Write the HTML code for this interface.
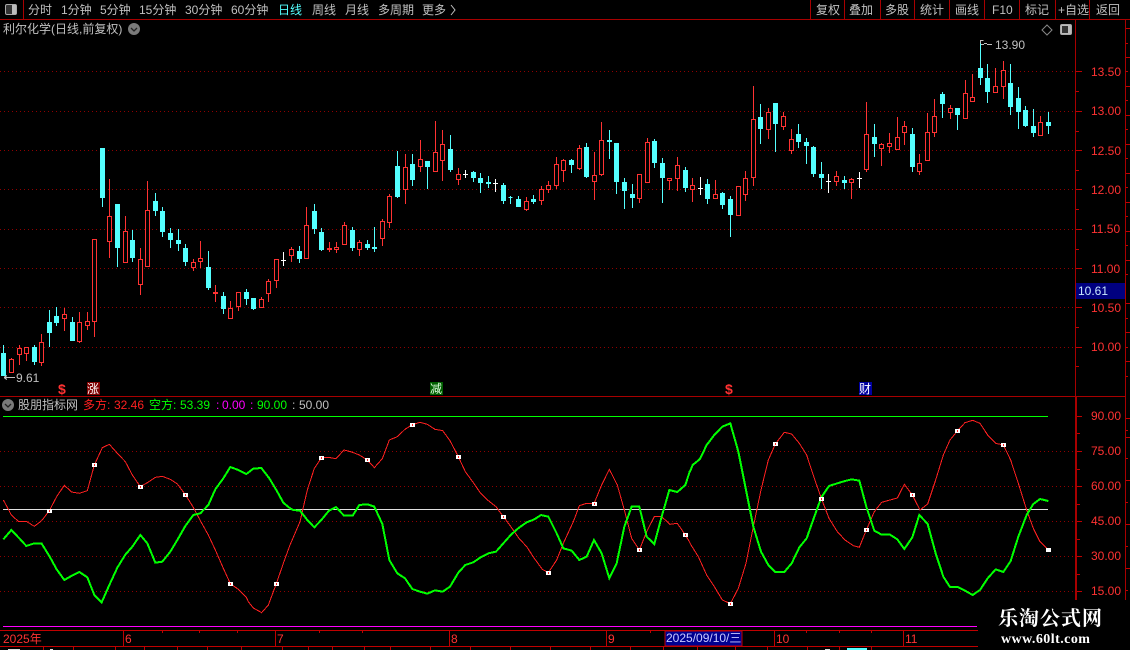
<!DOCTYPE html>
<html><head><meta charset="utf-8">
<style>
html,body{margin:0;padding:0;background:#000;}
#p{position:relative;width:1130px;height:650px;overflow:hidden;background:#000;font:12px/16px "Liberation Sans","WenQuanYi Zen Hei","Noto Sans CJK SC",sans-serif;color:#c0c0c0;}
#p svg{position:absolute;left:0;top:0;}
.t{position:absolute;white-space:nowrap;line-height:16px;height:16px;}
.r{color:#ff3232}.g{color:#00ff00}.m{color:#ff00ff}.c{color:#54ffff}.a{color:#ff3232;left:1091px}
</style></head><body><div id="p">
<svg width="1130" height="650" viewBox="0 0 1130 650" shape-rendering="crispEdges">
<!-- frame -->
<g fill="#a80000">
<rect x="0" y="19" width="1130" height="1"/>
<rect x="23" y="0" width="1" height="19"/>
<rect x="810" y="0" width="1" height="19"/><rect x="844" y="0" width="1" height="19"/><rect x="880" y="0" width="1" height="19"/><rect x="914" y="0" width="1" height="19"/><rect x="949" y="0" width="1" height="19"/><rect x="984" y="0" width="1" height="19"/><rect x="1019" y="0" width="1" height="19"/><rect x="1055" y="0" width="1" height="19"/><rect x="1089" y="0" width="1" height="19"/>
<rect x="0" y="396" width="1075" height="1"/>
<rect x="1075" y="20" width="1" height="376"/>
<rect x="1075" y="396" width="2" height="204"/>
<rect x="1125" y="20" width="1" height="580"/>
<rect x="1075" y="396" width="51" height="1"/>
<path d="M0 630.5H978M0 646.5H978" stroke="#c00000" fill="none"/>
</g>
<!-- ticks -->
<path d="M1076 71.5h6M1076 91.5h3M1076 111.5h6M1076 131.5h3M1076 150.5h6M1076 170.5h3M1076 189.5h6M1076 209.5h3M1076 229.5h6M1076 249.5h3M1076 268.5h6M1076 288.5h3M1076 307.5h6M1076 327.5h3M1076 347.5h6M1076 366.5h3
M1077 416.5h5M1077 433.5h3M1077 451.5h5M1077 469.5h3M1077 486.5h5M1077 504.5h3M1077 521.5h5M1077 539.5h3M1077 556.5h5M1077 574.5h3M1077 591.5h5
M1126 28.5h4M1126 43.5h2M1126 57.5h4M1126 71.5h2M1126 86.5h4M1126 100.5h2M1126 115.5h4M1126 129.5h2M1126 144.5h4M1126 158.5h2M1126 173.5h4M1126 187.5h2M1126 202.5h4M1126 216.5h2M1126 231.5h4M1126 245.5h2M1126 260.5h4M1126 274.5h2M1126 303.5h4M1126 318.5h2M1126 332.5h4M1126 347.5h2M1126 361.5h4M1126 376.5h2
M1126 418.5h4M1126 430.5h2M1126 437.5h4M1126 458.5h2M1126 480.5h4M1126 502.5h2M1126 524.5h4M1126 546.5h2M1126 568.5h4M1126 590.5h2
M162.5 631v2M199.5 631v2M237.5 631v2M319.5 631v2M362.5 631v2M650.5 631v2M806.5 631v2M839.5 631v2M871.5 631v2
M123.5 631v15M275.5 631v15M449.5 631v15M606.5 631v15M774.5 631v15M903.5 631v15
M43.5 647v3M73.5 647v3M115.5 647v3M144.5 647v3M177.5 647v3M207.5 647v3M241.5 647v3M282.5 647v3M308.5 647v3M332.5 647v3M364.5 647v3M390.5 647v3M430.5 647v3M470.5 647v3M510.5 647v3M550.5 647v3M590.5 647v3M630.5 647v3M663.5 647v3M697.5 647v3M735.5 647v3M767.5 647v3M807.5 647v3M839.5 647v3M871.5 647v3" stroke="#c00000" fill="none"/>
<!-- grids -->
<g shape-rendering="geometricPrecision" stroke="#900000" stroke-dasharray="1 3" fill="none">
<path d="M0 71.5H1075"/><path d="M0 111.5H1075"/><path d="M0 150.5H1075"/><path d="M0 189.5H1075"/><path d="M0 229.5H1075"/><path d="M0 268.5H1075"/><path d="M0 307.5H1075"/><path d="M0 347.5H1075"/><path d="M0 451.5H1075"/><path d="M0 486.5H1075"/><path d="M0 521.5H1075"/><path d="M0 556.5H1075"/><path d="M0 591.5H1075"/>
</g>
<!-- red wicks -->
<path stroke="#ff3232" fill="none" d="M11.5 358V373M19.5 345V365M26.5 347V361M41.5 334V366M64.5 308V331M79.5 312V343M87.5 312V330M94.5 239V337M109.5 179V258M125.5 216V263M140.5 248V295M147.5 181V267M193.5 259V271M200.5 241V268M215.5 285V302M230.5 301V319M238.5 292V311M261.5 297V308M268.5 279V302M276.5 259V288M291.5 247V262M306.5 207V259M329.5 242V252M336.5 242V253M344.5 222V245M359.5 240V256M382.5 219V246M389.5 194V228M405.5 154V204M420.5 140V172M435.5 121V172M442.5 130V181M458.5 168V185M526.5 197V211M541.5 186V205M548.5 181V193M556.5 157V189M563.5 159V182M579.5 145V170M594.5 152V200M601.5 122V176M639.5 174V203M647.5 138V183M669.5 178V190M677.5 157V191M692.5 178V202M715.5 180V199M738.5 186V216M745.5 171V201M753.5 86V186M768.5 108V139M783.5 112V130M791.5 129V154M836.5 171V186M851.5 178V199M866.5 102V172M881.5 143V166M889.5 133V153M897.5 117V150M904.5 121V145M919.5 154V175M927.5 113V161M934.5 99V137M950.5 105V119M965.5 80V119M972.5 74V102M995.5 68V93M1003.5 61V99M1040.5 116V136"/>
<!-- red bodies -->
<path stroke="#ff3232" fill="#000" d="M9.5 359.5h4V372.5h-4zM17.5 348.5h4V354.5h-4zM24.5 347.5h4V353.5h-4zM39.5 342.5h4V362.5h-4zM62.5 314.5h4V318.5h-4zM77.5 322.5h4V341.5h-4zM85.5 321.5h4V325.5h-4zM92.5 239.5h4V321.5h-4zM107.5 216.5h4V241.5h-4zM123.5 231.5h4V262.5h-4zM138.5 259.5h4V284.5h-4zM145.5 210.5h4V266.5h-4zM191.5 262.5h4V267.5h-4zM198.5 258.5h4V261.5h-4zM213.5 292.5h4V293.5h-4zM228.5 308.5h4V318.5h-4zM236.5 292.5h4V306.5h-4zM259.5 299.5h4V307.5h-4zM266.5 281.5h4V293.5h-4zM274.5 259.5h4V280.5h-4zM289.5 249.5h4V255.5h-4zM304.5 225.5h4V258.5h-4zM327.5 248.5h4V249.5h-4zM334.5 247.5h4V249.5h-4zM342.5 225.5h4V244.5h-4zM357.5 242.5h4V249.5h-4zM380.5 221.5h4V238.5h-4zM387.5 196.5h4V222.5h-4zM403.5 167.5h4V189.5h-4zM418.5 159.5h4V166.5h-4zM433.5 152.5h4V171.5h-4zM440.5 144.5h4V160.5h-4zM456.5 174.5h4V179.5h-4zM524.5 201.5h4V209.5h-4zM539.5 189.5h4V200.5h-4zM546.5 185.5h4V189.5h-4zM554.5 164.5h4V185.5h-4zM561.5 160.5h4V170.5h-4zM577.5 148.5h4V168.5h-4zM592.5 175.5h4V181.5h-4zM599.5 140.5h4V174.5h-4zM637.5 174.5h4V198.5h-4zM645.5 142.5h4V182.5h-4zM667.5 178.5h4V180.5h-4zM675.5 165.5h4V178.5h-4zM690.5 185.5h4V189.5h-4zM713.5 194.5h4V198.5h-4zM736.5 186.5h4V215.5h-4zM743.5 178.5h4V194.5h-4zM751.5 119.5h4V177.5h-4zM766.5 112.5h4V129.5h-4zM781.5 116.5h4V126.5h-4zM789.5 139.5h4V150.5h-4zM834.5 176.5h4V181.5h-4zM849.5 179.5h4V182.5h-4zM864.5 134.5h4V169.5h-4zM879.5 144.5h4V148.5h-4zM887.5 143.5h4V146.5h-4zM895.5 137.5h4V149.5h-4zM902.5 126.5h4V132.5h-4zM917.5 163.5h4V171.5h-4zM925.5 132.5h4V160.5h-4zM932.5 116.5h4V132.5h-4zM948.5 108.5h4V112.5h-4zM963.5 93.5h4V118.5h-4zM970.5 97.5h4V101.5h-4zM993.5 86.5h4V92.5h-4zM1001.5 70.5h4V86.5h-4zM1038.5 122.5h4V135.5h-4z"/>
<!-- cyan -->
<path stroke="#54ffff" fill="#54ffff" d="M3.5 345V376M1.5 353.5h4V375.5h-4zM34.5 345V365M32.5 347.5h4V361.5h-4zM49.5 310V347M47.5 322.5h4V332.5h-4zM56.5 307V326M54.5 316.5h4V322.5h-4zM72.5 317V341M70.5 322.5h4V340.5h-4zM102.5 148V207M100.5 148.5h4V197.5h-4zM117.5 204V267M115.5 204.5h4V247.5h-4zM132.5 230V262M130.5 240.5h4V257.5h-4zM155.5 193V216M153.5 201.5h4V210.5h-4zM162.5 207V237M160.5 211.5h4V231.5h-4zM170.5 228V248M168.5 233.5h4V239.5h-4zM178.5 229V251M176.5 240.5h4V243.5h-4zM185.5 244V266M183.5 248.5h4V261.5h-4zM208.5 251V290M206.5 267.5h4V287.5h-4zM223.5 292V314M221.5 296.5h4V308.5h-4zM246.5 289V305M244.5 292.5h4V298.5h-4zM253.5 298V310M251.5 298.5h4V308.5h-4zM299.5 246V263M297.5 251.5h4V258.5h-4zM314.5 204V234M312.5 211.5h4V228.5h-4zM321.5 228V251M319.5 232.5h4V249.5h-4zM352.5 227V251M350.5 230.5h4V247.5h-4zM367.5 240V250M365.5 244.5h4V247.5h-4zM374.5 227V252M372.5 247.5h4V248.5h-4zM397.5 151V198M395.5 166.5h4V196.5h-4zM412.5 154V186M410.5 164.5h4V179.5h-4zM427.5 161V189M425.5 161.5h4V166.5h-4zM450.5 135V172M448.5 149.5h4V169.5h-4zM473.5 171V182M471.5 172.5h4V177.5h-4zM480.5 173V193M478.5 178.5h4V182.5h-4zM488.5 176V188M486.5 182.5h4V183.5h-4zM503.5 183V204M501.5 185.5h4V200.5h-4zM510.5 196V204M508.5 197.5h4V197.5h-4zM518.5 196V207M516.5 199.5h4V206.5h-4zM533.5 195V204M531.5 199.5h4V201.5h-4zM571.5 159V173M569.5 160.5h4V164.5h-4zM586.5 143V178M584.5 147.5h4V176.5h-4zM609.5 130V159M607.5 140.5h4V141.5h-4zM616.5 143V194M614.5 143.5h4V181.5h-4zM624.5 178V209M622.5 182.5h4V190.5h-4zM632.5 184V208M630.5 194.5h4V197.5h-4zM654.5 139V168M652.5 141.5h4V162.5h-4zM662.5 158V203M660.5 163.5h4V177.5h-4zM685.5 167V192M683.5 170.5h4V187.5h-4zM707.5 179V204M705.5 184.5h4V198.5h-4zM722.5 192V209M720.5 193.5h4V204.5h-4zM730.5 196V237M728.5 199.5h4V214.5h-4zM760.5 104V144M758.5 117.5h4V128.5h-4zM775.5 103V152M773.5 103.5h4V123.5h-4zM798.5 124V148M796.5 134.5h4V141.5h-4zM806.5 138V164M804.5 142.5h4V145.5h-4zM813.5 146V177M811.5 147.5h4V173.5h-4zM821.5 162V189M819.5 174.5h4V177.5h-4zM844.5 176V189M842.5 180.5h4V182.5h-4zM874.5 124V157M872.5 137.5h4V143.5h-4zM912.5 128V172M910.5 134.5h4V166.5h-4zM942.5 92V118M940.5 94.5h4V103.5h-4zM957.5 108V130M955.5 108.5h4V114.5h-4zM980.5 41V85M978.5 68.5h4V77.5h-4zM987.5 64V103M985.5 78.5h4V91.5h-4zM1010.5 64V115M1008.5 83.5h4V106.5h-4zM1018.5 87V129M1016.5 98.5h4V111.5h-4zM1025.5 106V127M1023.5 110.5h4V125.5h-4zM1033.5 109V137M1031.5 126.5h4V132.5h-4zM1048.5 112V134M1046.5 122.5h4V125.5h-4z"/>
<!-- white doji -->
<path stroke="#ffffff" fill="none" d="M283.5 252V266M281 260.5h5M465.5 170V178M463 174.5h5M495.5 179V192M493 183.5h5M700.5 177V195M698 188.5h5M828.5 174V193M826 181.5h5M859.5 172V188M857 178.5h5"/>
<!-- hi/lo markers -->
<path stroke="#c0c0c0" fill="none" d="M981 44.5h3M983.5 40.5h-3v3M984 43.5h3M987 44.5h5M4 377.5h11M4 377.5l3-2M4 377.5l3 2"/>
<!-- magenta and reference lines -->
<rect x="3" y="416" width="1045" height="1" fill="#00ff00"/>
<rect x="3" y="509" width="1045" height="1" fill="#e0e0e0"/>
<rect x="3" y="626" width="974" height="1" fill="#ff00ff"/>
<!-- curves: part 1 -->
<g transform="scale(.33333) translate(0 1200)" fill="none">
<polyline stroke="#ff2020" stroke-width="3" points="10,300 22,322 34,345 55,364 79,364 103,379 125,362 148,332 170,290 193,256 215,276 238,280 262,272 283,195 307,143 328,133 352,160 376,185 397,225 421,260 442,248 466,232 487,229 511,238 532,252 556,284 580,322 601,362 625,405 646,450 670,505 691,551 715,568 739,592 745,605 760,624 785,638 805,615 820,575 829,551 850,490 870,435"/>
<polyline stroke="#00ff00" stroke-width="6" points="10,418 34,390 58,415 79,438 103,430 125,431 148,468 170,508 193,540 214,528 238,516 262,532 283,585 305,607 328,555 352,503 376,464 397,440 421,405 442,430 466,488 487,485 511,455 532,420 556,378 580,345 601,340 625,315 646,268 670,235 691,201 715,210 739,222 760,206 784,204 808,235 829,270 850,308 870,325"/>
</g>
<g transform="scale(.33333) translate(870 1200)" fill="none">
<polyline stroke="#ff2020" stroke-width="3" points="0,435 30,365 52,270 73,205 94,174 115,172 138,176 162,150 185,156 208,165 232,180 253,203 277,176 298,120 322,110 345,88 367,74 390,67 412,73 435,88 458,92 480,122 505,170 526,215 550,248 572,280 595,302 618,320 640,350 664,382 687,415 710,440 733,475 757,508 775,518 800,480 820,430 850,365 868,317 890,310 912,311 935,255 958,208 982,255 1003,330 1025,415 1048,450 1070,395 1093,350 1115,350 1140,373 1162,370 1186,405 1200,428"/>
<polyline stroke="#00ff00" stroke-width="6" points="0,325 10,330 30,332 52,360 73,382 94,360 117,332 138,321 162,347 188,347 208,315 232,313 253,320 277,372 298,480 322,520 345,535 367,567 390,575 412,581 435,571 458,575 480,560 505,518 526,495 550,487 572,472 595,460 618,455 640,430 664,403 687,383 710,367 733,358 753,345 775,350 800,400 820,445 845,452 868,480 890,470 912,420 935,460 958,535 980,490 1003,380 1025,320 1048,320 1070,410 1093,432 1115,350 1138,270 1162,276 1186,255 1200,212"/>
</g>
<g transform="scale(.33333) translate(2070 1200)" fill="none">
<polyline stroke="#ff2020" stroke-width="3" points="0,430 25,470 50,525 73,560 97,600 121,611 145,565 168,490 190,380 213,270 235,180 256,132 283,97 305,102 328,130 350,165 373,235 394,295 417,355 442,395 465,420 490,437 508,442 529,390 553,335 575,307 600,300 622,294 643,253 667,285 690,330 713,312 737,240 760,165 780,120 802,93 825,68 848,61 870,70 893,105 917,130 940,135 962,180 985,250 1010,330 1030,385 1050,425 1075,450"/>
<polyline stroke="#00ff00" stroke-width="6" points="0,215 8,195 30,177 50,135 73,105 97,80 121,70 145,155 168,270 190,380 213,455 235,495 256,516 283,516 305,490 328,442 350,415 373,350 394,292 417,258 442,250 465,243 485,238 508,242 529,320 553,392 575,404 600,404 622,418 643,447 667,412 688,345 713,372 737,460 760,530 780,561 803,561 825,572 848,585 870,570 893,535 917,508 940,516 962,483 985,410 1010,345 1030,312 1050,297 1075,303"/>
</g>
<!-- square markers -->
<g fill="#fff">
<rect x="47" y="509" width="5" height="4"/><rect x="92" y="463" width="5" height="4"/><rect x="138" y="485" width="5" height="4"/><rect x="183" y="493" width="5" height="4"/><rect x="228" y="582" width="5" height="4"/><rect x="274" y="582" width="5" height="4"/><rect x="319" y="456" width="5" height="4"/><rect x="365" y="458" width="5" height="4"/><rect x="410" y="423" width="5" height="4"/><rect x="456" y="455" width="5" height="4"/><rect x="501" y="515" width="5" height="4"/><rect x="546" y="571" width="5" height="4"/><rect x="592" y="502" width="5" height="4"/><rect x="637" y="548" width="5" height="4"/><rect x="683" y="533" width="5" height="4"/><rect x="728" y="602" width="5" height="4"/><rect x="773" y="442" width="5" height="4"/><rect x="819" y="497" width="5" height="4"/><rect x="864" y="528" width="5" height="4"/><rect x="910" y="493" width="5" height="4"/><rect x="955" y="429" width="5" height="4"/><rect x="1001" y="443" width="5" height="4"/><rect x="1046" y="548" width="5" height="4"/>
</g>
<g fill="#ff2020">
<rect x="49" y="510" width="1" height="2"/><rect x="94" y="464" width="1" height="2"/><rect x="140" y="486" width="1" height="2"/><rect x="185" y="494" width="1" height="2"/><rect x="230" y="583" width="1" height="2"/><rect x="276" y="583" width="1" height="2"/><rect x="321" y="457" width="1" height="2"/><rect x="367" y="459" width="1" height="2"/><rect x="412" y="424" width="1" height="2"/><rect x="458" y="456" width="1" height="2"/><rect x="503" y="516" width="1" height="2"/><rect x="548" y="572" width="1" height="2"/><rect x="594" y="503" width="1" height="2"/><rect x="639" y="549" width="1" height="2"/><rect x="685" y="534" width="1" height="2"/><rect x="730" y="603" width="1" height="2"/><rect x="775" y="443" width="1" height="2"/><rect x="821" y="498" width="1" height="2"/><rect x="866" y="529" width="1" height="2"/><rect x="912" y="494" width="1" height="2"/><rect x="957" y="430" width="1" height="2"/><rect x="1003" y="444" width="1" height="2"/>
</g>
<!-- signal backgrounds -->
<rect x="87" y="382" width="13" height="13" fill="#800000"/>
<rect x="430" y="382" width="13" height="13" fill="#006000"/>
<rect x="859" y="382" width="13" height="13" fill="#0000a0"/>
<!-- price tag and date box -->
<rect x="1076" y="283" width="49" height="16" fill="#000080"/>
<rect x="665" y="631" width="77" height="15" fill="#000090" stroke="#c00000"/>
<!-- icons -->
<g shape-rendering="auto">
<rect x="5.5" y="4.5" width="11" height="10" rx="1.5" fill="#333" stroke="#aaa"/><rect x="12" y="5" width="4" height="9" fill="#bbb"/>
<circle cx="134" cy="29" r="6" fill="#7a7a7a"/><path d="M131 28l3 3 3-3" stroke="#222" stroke-width="1.3" fill="none"/>
<circle cx="8" cy="405" r="6" fill="#7a7a7a"/><path d="M5 404l3 3 3-3" stroke="#222" stroke-width="1.3" fill="none"/>
<path d="M1047 25l5 5-5 5-5-5z" fill="none" stroke="#888"/>
<rect x="1060.5" y="24.5" width="11" height="10" rx="1.5" fill="#bbb" stroke="#aaa"/><rect x="1062" y="26" width="6" height="7" fill="#333"/>
<path d="M451 5l4 5-4 5" fill="none" stroke="#c0c0c0"/>
</g>
<!-- watermark mask -->
<rect x="978" y="600" width="152" height="50" fill="#000"/>
<!-- bottom clipped row -->
<path fill="#ddd" d="M8 649h12v1H8zM50 649h3v1h-3zM825 649h5v1h-5z"/><path fill="#54ffff" d="M847 648h20v2h-20z"/>
</svg>

<div class="t" style="left:28px;top:2px">分时</div>
<div class="t" style="left:61px;top:2px">1分钟</div>
<div class="t" style="left:100px;top:2px">5分钟</div>
<div class="t" style="left:139px;top:2px">15分钟</div>
<div class="t" style="left:185px;top:2px">30分钟</div>
<div class="t" style="left:231px;top:2px">60分钟</div>
<div class="t c" style="left:278px;top:2px">日线</div>
<div class="t" style="left:312px;top:2px">周线</div>
<div class="t" style="left:345px;top:2px">月线</div>
<div class="t" style="left:378px;top:2px">多周期</div>
<div class="t" style="left:422px;top:2px">更多</div>

<div class="t" style="left:816px;top:2px">复权</div>
<div class="t" style="left:849px;top:2px">叠加</div>
<div class="t" style="left:885px;top:2px">多股</div>
<div class="t" style="left:920px;top:2px">统计</div>
<div class="t" style="left:955px;top:2px">画线</div>
<div class="t" style="left:992px;top:2px">F10</div>
<div class="t" style="left:1025px;top:2px">标记</div>
<div class="t" style="left:1058px;top:2px">+自选</div>
<div class="t" style="left:1096px;top:2px">返回</div>

<div class="t" style="left:3px;top:21px">利尔化学(日线,前复权)</div>
<div class="t" style="left:995px;top:37px">13.90</div>
<div class="t" style="left:16px;top:370px">9.61</div>

<div class="t a" style="top:64px">13.50</div>
<div class="t a" style="top:103px">13.00</div>
<div class="t a" style="top:143px">12.50</div>
<div class="t a" style="top:182px">12.00</div>
<div class="t a" style="top:221px">11.50</div>
<div class="t a" style="top:261px">11.00</div>
<div class="t a" style="top:300px">10.50</div>
<div class="t a" style="top:339px">10.00</div>
<div class="t" style="left:1078px;top:283px;color:#c8e8ff">10.61</div>

<div class="t r" style="left:58px;top:381px;font-weight:bold;font-size:14px">$</div>
<div class="t" style="left:87px;top:381px;color:#fff">涨</div>
<div class="t" style="left:430px;top:381px;color:#dfffdf">减</div>
<div class="t r" style="left:725px;top:381px;font-weight:bold;font-size:14px">$</div>
<div class="t" style="left:859px;top:381px;color:#fff">财</div>

<div class="t" style="left:18px;top:397px">股朋指标网</div>
<div class="t" style="left:83px;top:397px;color:#ff2020">多方:</div>
<div class="t" style="left:114px;top:397px;color:#ff2020">32.46</div>
<div class="t g" style="left:149px;top:397px">空方:</div>
<div class="t g" style="left:180px;top:397px">53.39</div>
<div class="t m" style="left:216px;top:397px">:</div>
<div class="t m" style="left:222px;top:397px">0.00</div>
<div class="t m" style="left:250px;top:397px">:</div>
<div class="t g" style="left:257px;top:397px">90.00</div>
<div class="t" style="left:292px;top:397px">:</div>
<div class="t" style="left:299px;top:397px">50.00</div>

<div class="t a" style="top:408px">90.00</div>
<div class="t a" style="top:443px">75.00</div>
<div class="t a" style="top:478px">60.00</div>
<div class="t a" style="top:513px">45.00</div>
<div class="t a" style="top:548px">30.00</div>
<div class="t a" style="top:583px">15.00</div>

<div class="t r" style="left:3px;top:631px">2025年</div>
<div class="t r" style="left:125px;top:631px">6</div>
<div class="t r" style="left:277px;top:631px">7</div>
<div class="t r" style="left:451px;top:631px">8</div>
<div class="t r" style="left:608px;top:631px">9</div>
<div class="t" style="left:666px;top:630px;color:#c8c8ff">2025/09/10/三</div>
<div class="t r" style="left:776px;top:631px">10</div>
<div class="t r" style="left:905px;top:631px">11</div>

<div class="t" style="left:998px;top:608px;height:22px;line-height:22px;font-size:20px;font-weight:bold;font-family:'Liberation Serif','Noto Serif CJK SC',serif;color:#fff;letter-spacing:1px">乐淘公式网</div>
<div class="t" style="left:1001px;top:632px;font-size:14px;font-weight:bold;font-family:'Liberation Serif',serif;color:#fff;letter-spacing:.45px">www.60lt.com</div>
</div></body></html>
